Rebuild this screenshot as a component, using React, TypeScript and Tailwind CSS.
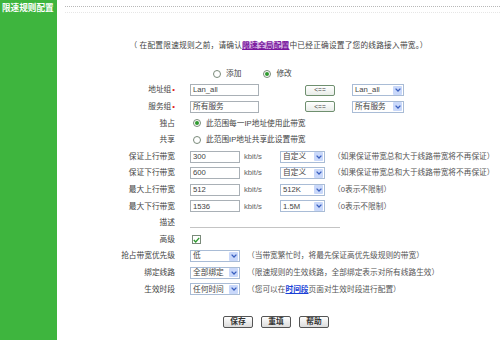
import React from "react";

const FONT = { fontFamily: '"Liberation Sans", "Noto Sans CJK SC", sans-serif' };

function Radio({ checked }: { checked?: boolean }) {
  return (
    <span className="inline-flex items-center justify-center w-[8px] h-[8px] rounded-full border border-[#7a8a7a] bg-white shrink-0">
      {checked && <span className="w-[4px] h-[4px] rounded-full bg-[#2f9a2f]" />}
    </span>
  );
}

function Input({ value, w }: { value?: string; w: string }) {
  return (
    <div className={`${w} h-[12px] border border-[#a9b0b6] bg-white flex items-center px-[2px] text-[#444] leading-none`}>
      {value}
    </div>
  );
}

function Select({ value, w }: { value: string; w: string }) {
  return (
    <div className={`${w} h-[12px] border border-[#a9bcd6] bg-white flex items-center justify-between pl-[2px] pr-[1px] text-[#444] leading-none`}>
      <span>{value}</span>
      <span className="w-[9px] h-[9px] bg-[#c9d8fa] rounded-[1px] flex items-center justify-center">
        <svg width="6" height="4" viewBox="0 0 6 4">
          <path d="M0.6 0.6 L3 3 L5.4 0.6" stroke="#3a5fbf" strokeWidth="1.3" fill="none" />
        </svg>
      </span>
    </div>
  );
}

function Row({ label, star, children }: { label: string; star?: boolean; children?: React.ReactNode }) {
  return (
    <div className="flex items-center h-[16.6px]">
      <div className="w-[118px] text-right text-[#444] leading-none">
        {label}
        {star && <span className="text-[#e02020] ml-[1px]">•</span>}
      </div>
      <div className="ml-[15px] flex items-center flex-1">{children}</div>
    </div>
  );
}

function Note({ children, ml }: { children: React.ReactNode; ml: string }) {
  return <span className={`${ml} text-[#555] leading-none whitespace-nowrap`}>{children}</span>;
}

function Btn({ children }: { children: React.ReactNode }) {
  return (
    <div className="w-[30px] h-[12px] border border-[#555] rounded-[2px] bg-gradient-to-b from-white to-[#dcdcdc] flex items-center justify-center font-bold text-[#333] leading-none">
      {children}
    </div>
  );
}

export default function App() {
  return (
    <div className="flex w-[500px] h-[340px] bg-white overflow-hidden text-[7.7px]" style={FONT}>
      <div className="w-[57px] shrink-0 bg-[#3eb53e]">
        <div className="pt-[3px] pl-[2px] text-white font-bold text-[8.6px] leading-[10px] whitespace-nowrap">
          限速规则配置
        </div>
      </div>
      <div className="flex-1 flex flex-col">
        <div className="h-[20px] pl-[8px] pt-[6px]">
          <div className="border-t border-dotted border-[#b8b8b8]" />
          <div className="mt-[5px] border-t border-dotted border-[#e6e6e6]" />
        </div>
        <div className="mt-[20px] h-[12px] flex items-center justify-center text-[#444] leading-none whitespace-nowrap tracking-[0.2px]">
          （ 在配置限速规则之前，请确认
          <span className="bg-[#d3b0e3] text-[#7a169e] underline font-bold">限速全局配置</span>
          中已经正确设置了您的线路接入带宽。）
        </div>
        <div className="mt-[14px] h-[16px] flex items-center pl-[156px] text-[#444] leading-none">
          <Radio />
          <span className="ml-[5px]">添加</span>
          <span className="ml-[22px]" />
          <Radio checked />
          <span className="ml-[5px]">修改</span>
        </div>
        <Row label="地址组" star>
          <Input value="Lan_all" w="w-[69px]" />
          <div className="ml-[46px] w-[30px] h-[11px] border border-[#6f8f6f] rounded-[2px] bg-gradient-to-b from-white to-[#e8ece8] flex items-center justify-center text-[6.5px] text-[#444] leading-none">
            &lt;==
          </div>
          <div className="ml-[17px]">
            <Select value="Lan_all" w="w-[52px]" />
          </div>
        </Row>
        <Row label="服务组" star>
          <Input value="所有服务" w="w-[69px]" />
          <div className="ml-[46px] w-[30px] h-[11px] border border-[#6f8f6f] rounded-[2px] bg-gradient-to-b from-white to-[#e8ece8] flex items-center justify-center text-[6.5px] text-[#444] leading-none">
            &lt;==
          </div>
          <div className="ml-[17px]">
            <Select value="所有服务" w="w-[52px]" />
          </div>
        </Row>
        <Row label="独占">
          <span className="ml-[3px]" />
          <Radio checked />
          <span className="ml-[5px] text-[#444] leading-none whitespace-nowrap">此范围每一IP地址使用此带宽</span>
        </Row>
        <Row label="共享">
          <span className="ml-[3px]" />
          <Radio />
          <span className="ml-[5px] text-[#444] leading-none whitespace-nowrap">此范围IP地址共享此设置带宽</span>
        </Row>
        <Row label="保证上行带宽">
          <Input value="300" w="w-[50px]" />
          <span className="ml-[4px] w-[36px] text-[#666] leading-none">kbit/s</span>
          <Select value="自定义" w="w-[45px]" />
          <Note ml="ml-[8px]">（如果保证带宽总和大于线路带宽将不再保证）</Note>
        </Row>
        <Row label="保证下行带宽">
          <Input value="600" w="w-[50px]" />
          <span className="ml-[4px] w-[36px] text-[#666] leading-none">kbit/s</span>
          <Select value="自定义" w="w-[45px]" />
          <Note ml="ml-[8px]">（如果保证带宽总和大于线路带宽将不再保证）</Note>
        </Row>
        <Row label="最大上行带宽">
          <Input value="512" w="w-[50px]" />
          <span className="ml-[4px] w-[36px] text-[#666] leading-none">kbit/s</span>
          <Select value="512K" w="w-[45px]" />
          <Note ml="ml-[8px]">（0表示不限制）</Note>
        </Row>
        <Row label="最大下行带宽">
          <Input value="1536" w="w-[50px]" />
          <span className="ml-[4px] w-[36px] text-[#666] leading-none">kbit/s</span>
          <Select value="1.5M" w="w-[45px]" />
          <Note ml="ml-[8px]">（0表示不限制）</Note>
        </Row>
        <Row label="描述">
          <div className="w-[150px] h-[9px] border-b border-[#c4c4c4] self-start" />
        </Row>
        <Row label="高级">
          <span className="ml-[2px] w-[9px] h-[9px] border border-[#7a8a7a] bg-white flex items-center justify-center">
            <svg width="7" height="6" viewBox="0 0 7 6">
              <path d="M0.8 3 L2.7 4.9 L6.2 0.9" stroke="#2f9a2f" strokeWidth="1.4" fill="none" />
            </svg>
          </span>
        </Row>
        <Row label="抢占带宽优先级">
          <Select value="低" w="w-[50px]" />
          <Note ml="ml-[7px]">（当带宽繁忙时，将最先保证高优先级规则的带宽）</Note>
        </Row>
        <Row label="绑定线路">
          <Select value="全部绑定" w="w-[50px]" />
          <Note ml="ml-[7px]">（限速规则的生效线路，全部绑定表示对所有线路生效）</Note>
        </Row>
        <Row label="生效时段">
          <Select value="任何时间" w="w-[50px]" />
          <Note ml="ml-[7px]">
            （您可以在<span className="text-[#1a3fd6] font-bold underline">时间段</span>页面对生效时段进行配置）
          </Note>
        </Row>
        <div className="mt-[18px] flex items-center pl-[166px] gap-[8px]">
          <Btn>保存</Btn>
          <Btn>重填</Btn>
          <Btn>帮助</Btn>
        </div>
      </div>
    </div>
  );
}
